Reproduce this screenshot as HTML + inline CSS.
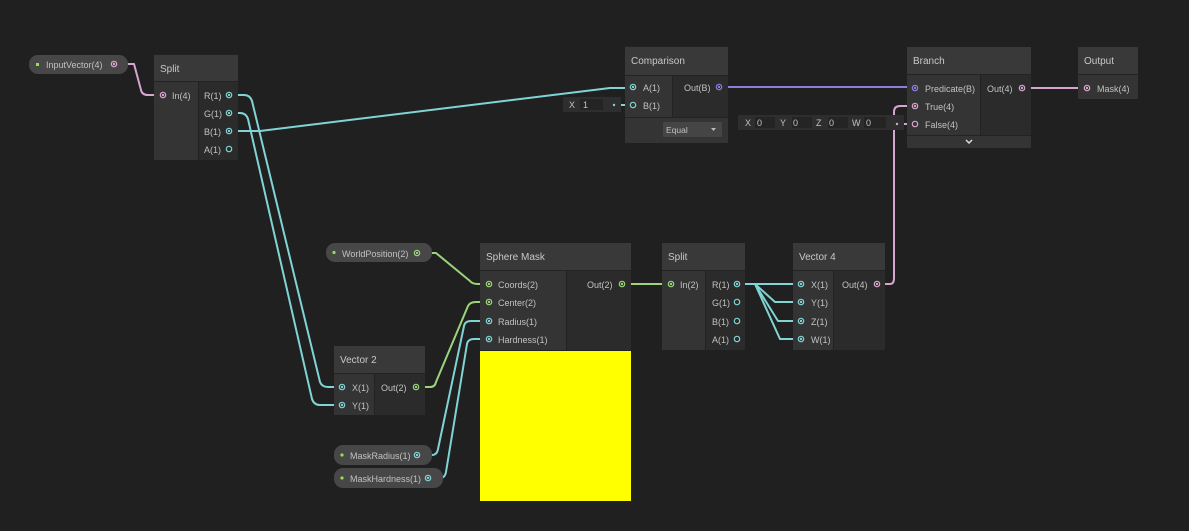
<!DOCTYPE html>
<html><head><meta charset="utf-8"><style>
html,body{margin:0;padding:0;background:#202020;}
svg{display:block;}
text{font-family:"Liberation Sans",sans-serif;font-size:9px;fill:#c2c2c2;}
.h{font-size:10px;fill:#c8c8c8;}
.hd{fill:#393939;}.lb{fill:#343434;}.rb{fill:#2b2b2b;}.sep{fill:#232323;}
.w{fill:none;stroke-width:2;stroke-linejoin:round;stroke-linecap:round;}
</style></head><body>
<svg width="1189" height="531" viewBox="0 0 1189 531">
<rect width="1189" height="531" fill="#202020"/>

<!-- wires -->
<g class="w">
<path stroke="#d6a5d0" d="M114,64 H134 L141,90 Q142,95 148,95 H163"/>
<path stroke="#80d4d4" d="M229,95 H244 Q250,95 252,101 L320,382 Q322,387 328,387 H342"/>
<path stroke="#80d4d4" d="M229,113 H240 Q246,113 248,119 L312,399 Q314,405 320,405 H342"/>
<path stroke="#80d4d4" d="M229,131 H260 L610,88 H633"/>
<path stroke="#80d4d4" d="M614,105 H633"/>
<path stroke="#8d7ddc" d="M719,87 H915"/>
<path stroke="#d6a5d0" d="M897,124 H915"/>
<path stroke="#d6a5d0" d="M877,284 H890 Q894,284 894,278 V112 Q894,106 900,106 H915"/>
<path stroke="#d6a5d0" d="M1022,88 H1087"/>
<path stroke="#9bd47a" d="M417,253 H436 L470,281 Q472,284 478,284 H489"/>
<path stroke="#9bd47a" d="M416,387 H430 Q435,387 436,382 L468,306 Q470,302 476,302 H489"/>
<path stroke="#80d4d4" d="M417,455 H432 Q437,455 438,449 L464,326 Q465,321 471,321 H489"/>
<path stroke="#80d4d4" d="M428,478 H440 Q445,478 446,472 L467,344 Q468,339 474,339 H489"/>
<path stroke="#9bd47a" d="M622,284 H671"/>
<path stroke="#80d4d4" d="M737,284 H801"/>
<path stroke="#80d4d4" d="M737,284 H755 L775,302 H801"/>
<path stroke="#80d4d4" d="M737,284 H755 L778,321 H801"/>
<path stroke="#80d4d4" d="M737,284 H755 L780,339 H801"/>
</g>

<!-- pills -->
<rect x="29" y="55" width="99" height="19" rx="9" fill="#474747"/>
<rect x="36" y="63" width="3" height="3" fill="#8fe05a"/>
<text x="46" y="68">InputVector(4)</text>
<rect x="326" y="243" width="106" height="19" rx="9" fill="#474747"/>
<circle cx="334" cy="252.5" r="1.6" fill="#8fe05a"/>
<text x="342" y="257">WorldPosition(2)</text>
<rect x="334" y="445" width="98" height="20" rx="9" fill="#474747"/>
<circle cx="342" cy="455" r="1.6" fill="#8fe05a"/>
<text x="350" y="459">MaskRadius(1)</text>
<rect x="334" y="468" width="109" height="20" rx="9" fill="#474747"/>
<circle cx="342" cy="478" r="1.6" fill="#8fe05a"/>
<text x="350" y="482">MaskHardness(1)</text>

<!-- Split 1 -->
<rect x="154" y="54" width="84" height="106" class="sep"/>
<rect x="154" y="55" width="84" height="26" class="hd"/>
<rect x="154" y="82" width="44" height="78" class="lb"/>
<rect x="199" y="82" width="39" height="78" class="rb"/>
<text x="160" y="72" class="h">Split</text>
<text x="172" y="99">In(4)</text>
<text x="204" y="99">R(1)</text><text x="204" y="117">G(1)</text><text x="204" y="135">B(1)</text><text x="204" y="153">A(1)</text>

<!-- Comparison -->
<rect x="625" y="46" width="103" height="97" class="sep"/>
<rect x="625" y="47" width="103" height="28" class="hd"/>
<rect x="625" y="76" width="47" height="41" class="lb"/>
<rect x="673" y="76" width="55" height="41" class="rb"/>
<rect x="625" y="118" width="103" height="25" class="lb"/>
<text x="631" y="64" class="h">Comparison</text>
<text x="643" y="91">A(1)</text><text x="643" y="109">B(1)</text>
<text x="684" y="91">Out(B)</text>
<rect x="663" y="122" width="59" height="15" fill="#454545" rx="1"/>
<text x="666" y="133" style="font-size:8.5px">Equal</text>
<path d="M711,128 h5 l-2.5,3 z" fill="#bbb"/>
<rect x="563" y="97" width="58" height="15" fill="#2e2e2e"/>
<rect x="580" y="99" width="23" height="11" fill="#242424"/>
<text x="569" y="108">X</text><text x="583" y="108">1</text>

<!-- vector4 field -->
<rect x="738" y="115" width="166" height="15" fill="#2e2e2e"/>
<rect x="755" y="117" width="20" height="11" fill="#242424"/>
<rect x="792" y="117" width="20" height="11" fill="#242424"/>
<rect x="828" y="117" width="20" height="11" fill="#242424"/>
<rect x="864" y="117" width="22" height="11" fill="#242424"/>
<text x="745" y="126">X</text><text x="757" y="126">0</text>
<text x="780" y="126">Y</text><text x="793" y="126">0</text>
<text x="816" y="126">Z</text><text x="829" y="126">0</text>
<text x="852" y="126">W</text><text x="866" y="126">0</text>

<!-- Branch -->
<rect x="907" y="47" width="124" height="101" class="sep"/>
<rect x="907" y="47" width="124" height="27" class="hd"/>
<rect x="907" y="75" width="73" height="60" class="lb"/>
<rect x="981" y="75" width="50" height="60" class="rb"/>
<rect x="907" y="136" width="124" height="12" class="lb"/>
<text x="913" y="64" class="h">Branch</text>
<text x="925" y="92">Predicate(B)</text><text x="925" y="110">True(4)</text><text x="925" y="128">False(4)</text>
<text x="987" y="92">Out(4)</text>
<path d="M966,140 l3,3 l3,-3" stroke="#ddd" stroke-width="1.5" fill="none"/>

<!-- Output -->
<rect x="1078" y="47" width="60" height="52" class="sep"/>
<rect x="1078" y="47" width="60" height="27" class="hd"/>
<rect x="1078" y="75" width="60" height="24" class="lb"/>
<text x="1084" y="64" class="h">Output</text>
<text x="1097" y="92">Mask(4)</text>

<!-- Sphere Mask -->
<rect x="480" y="243" width="151" height="107" class="sep"/>
<rect x="480" y="243" width="151" height="27" class="hd"/>
<rect x="480" y="271" width="86" height="79" class="lb"/>
<rect x="567" y="271" width="64" height="79" class="rb"/>
<text x="486" y="260" class="h">Sphere Mask</text>
<text x="498" y="288">Coords(2)</text><text x="498" y="306">Center(2)</text><text x="498" y="325">Radius(1)</text><text x="498" y="343">Hardness(1)</text>
<text x="587" y="288">Out(2)</text>
<rect x="480" y="351" width="151" height="150" fill="#ffff00"/>

<!-- Vector 2 -->
<rect x="334" y="346" width="91" height="69" class="sep"/>
<rect x="334" y="346" width="91" height="27" class="hd"/>
<rect x="334" y="374" width="40" height="41" class="lb"/>
<rect x="375" y="374" width="50" height="41" class="rb"/>
<text x="340" y="363" class="h">Vector 2</text>
<text x="352" y="391">X(1)</text><text x="352" y="409">Y(1)</text>
<text x="381" y="391">Out(2)</text>

<!-- Split 2 -->
<rect x="662" y="243" width="83" height="107" class="sep"/>
<rect x="662" y="243" width="83" height="27" class="hd"/>
<rect x="662" y="271" width="43" height="79" class="lb"/>
<rect x="706" y="271" width="39" height="79" class="rb"/>
<text x="668" y="260" class="h">Split</text>
<text x="680" y="288">In(2)</text>
<text x="712" y="288">R(1)</text><text x="712" y="306">G(1)</text><text x="712" y="325">B(1)</text><text x="712" y="343">A(1)</text>

<!-- Vector 4 -->
<rect x="793" y="243" width="92" height="107" class="sep"/>
<rect x="793" y="243" width="92" height="27" class="hd"/>
<rect x="793" y="271" width="40" height="79" class="lb"/>
<rect x="834" y="271" width="51" height="79" class="rb"/>
<text x="799" y="260" class="h">Vector 4</text>
<text x="811" y="288">X(1)</text><text x="811" y="306">Y(1)</text><text x="811" y="325">Z(1)</text><text x="811" y="343">W(1)</text>
<text x="842" y="288">Out(4)</text>

<!-- ports -->
<g stroke-width="1.2" fill="none">
<g stroke="#d6a5d0">
<circle cx="114" cy="64" r="2.7"/><circle cx="163" cy="95" r="2.7"/>
<circle cx="915" cy="106" r="2.7"/><circle cx="915" cy="124" r="2.7"/>
<circle cx="1022" cy="88" r="2.7"/><circle cx="1087" cy="88" r="2.7"/><circle cx="877" cy="284" r="2.7"/>
</g>
<g stroke="#80d4d4">
<circle cx="229" cy="95" r="2.7"/><circle cx="229" cy="113" r="2.7"/><circle cx="229" cy="131" r="2.7"/><circle cx="229" cy="149" r="2.7"/>
<circle cx="633" cy="87" r="2.7"/><circle cx="633" cy="105" r="2.7"/>
<circle cx="342" cy="387" r="2.7"/><circle cx="342" cy="405" r="2.7"/>
<circle cx="489" cy="321" r="2.7"/><circle cx="489" cy="339" r="2.7"/>
<circle cx="417" cy="455" r="2.7"/><circle cx="428" cy="478" r="2.7"/>
<circle cx="737" cy="284" r="2.7"/><circle cx="737" cy="302" r="2.7"/><circle cx="737" cy="321" r="2.7"/><circle cx="737" cy="339" r="2.7"/>
<circle cx="801" cy="284" r="2.7"/><circle cx="801" cy="302" r="2.7"/><circle cx="801" cy="321" r="2.7"/><circle cx="801" cy="339" r="2.7"/>
</g>
<g stroke="#9bd47a">
<circle cx="417" cy="253" r="2.7"/><circle cx="489" cy="284" r="2.7"/><circle cx="489" cy="302" r="2.7"/>
<circle cx="416" cy="387" r="2.7"/><circle cx="622" cy="284" r="2.7"/><circle cx="671" cy="284" r="2.7"/>
</g>
<g stroke="#8d7ddc"><circle cx="719" cy="87" r="2.7"/><circle cx="915" cy="88" r="2.7"/></g>
</g>
<g>
<g fill="#d6a5d0"><circle cx="114" cy="64" r="1.2"/><circle cx="163" cy="95" r="1.2"/><circle cx="915" cy="106" r="1.2"/><circle cx="1022" cy="88" r="1.2"/><circle cx="1087" cy="88" r="1.2"/><circle cx="877" cy="284" r="1.2"/><circle cx="897" cy="124" r="1.2"/></g>
<g fill="#80d4d4"><circle cx="229" cy="95" r="1.2"/><circle cx="229" cy="113" r="1.2"/><circle cx="229" cy="131" r="1.2"/><circle cx="633" cy="87" r="1.2"/><circle cx="614" cy="105" r="1.2"/><circle cx="342" cy="387" r="1.2"/><circle cx="342" cy="405" r="1.2"/><circle cx="489" cy="321" r="1.2"/><circle cx="489" cy="339" r="1.2"/><circle cx="417" cy="455" r="1.2"/><circle cx="428" cy="478" r="1.2"/><circle cx="737" cy="284" r="1.2"/><circle cx="801" cy="284" r="1.2"/><circle cx="801" cy="302" r="1.2"/><circle cx="801" cy="321" r="1.2"/><circle cx="801" cy="339" r="1.2"/></g>
<g fill="#9bd47a"><circle cx="417" cy="253" r="1.2"/><circle cx="489" cy="284" r="1.2"/><circle cx="489" cy="302" r="1.2"/><circle cx="416" cy="387" r="1.2"/><circle cx="622" cy="284" r="1.2"/><circle cx="671" cy="284" r="1.2"/></g>
<g fill="#8d7ddc"><circle cx="719" cy="87" r="1.2"/><circle cx="915" cy="88" r="1.2"/></g>
</g>
</svg>
</body></html>
